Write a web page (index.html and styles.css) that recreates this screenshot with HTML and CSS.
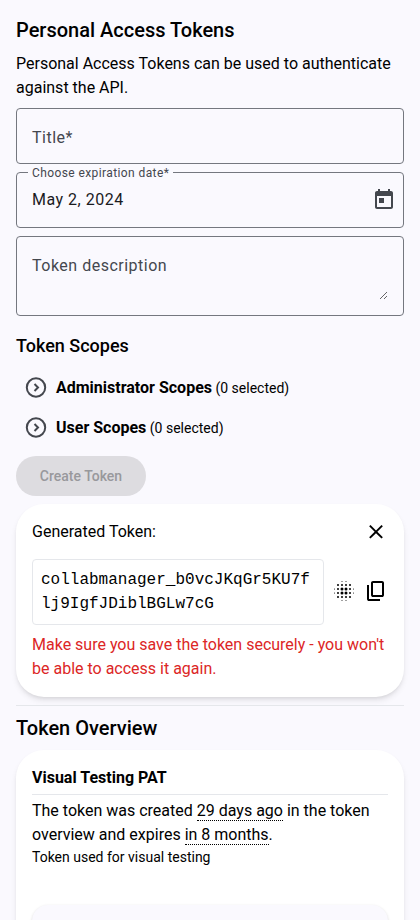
FILE: index.html
```html
<!DOCTYPE html>
<html lang="en">
<head>
<meta charset="utf-8">
<title>Personal Access Tokens</title>
<link rel="stylesheet" href="styles.css">
</head>
<body>
<main class="page">
  <h1 class="heading">Personal Access Tokens</h1>
  <p class="intro">Personal Access Tokens can be used to authenticate against the API.</p>
  <form class="form">
    <div class="field"><span class="placeholder">Title*</span></div>
    <div class="field">
      <label class="floating">Choose expiration date*</label>
      <span class="value">May 2, 2024</span>
      <svg class="icon muted" viewBox="0 0 24 24"><path d="M19 3h-1V1h-2v2H8V1H6v2H5c-1.11 0-1.99.9-1.99 2L3 19c0 1.1.89 2 2 2h14c1.1 0 2-.9 2-2V5c0-1.1-.9-2-2-2zm0 16H5V8h14v11zM7 10h5v5H7z"/></svg>
    </div>
    <div class="field area"><textarea class="textarea" placeholder="Token description"></textarea></div>
    <h2 class="subheading">Token Scopes</h2>
    <div class="scope">
      <svg class="icon chevron" viewBox="0 0 24 24"><circle cx="12" cy="11.5" r="9.200"/><path d="M10.500 8 14 11.500 10.500 15"/></svg>
      <span><b>Administrator Scopes</b><small> (0 selected)</small></span>
    </div>
    <div class="scope">
      <svg class="icon chevron" viewBox="0 0 24 24"><circle cx="12" cy="11.5" r="9.200"/><path d="M10.500 8 14 11.500 10.500 15"/></svg>
      <span><b>User Scopes</b><small> (0 selected)</small></span>
    </div>
    <button class="create" type="button" disabled>Create Token</button>
  </form>
  <section class="card generated">
    <div class="card-head">
      <span>Generated Token:</span>
      <svg class="icon" viewBox="0 0 24 24.500"><path d="M6.400 19 5 17.600 10.600 12 5 6.400 6.400 5 12 10.600 17.600 5 19 6.400 13.400 12 19 17.600 17.600 19 12 13.400z"/></svg>
    </div>
    <div class="token-row">
      <code class="token">collabmanager_b0vcJKqGr5KU7flj9IgfJDiblBGLw7cG</code>
      <svg class="icon raised" viewBox="0 0 24 24">
        <g><circle cx="10" cy="10" r="1.5"/><circle cx="14" cy="10" r="1.5"/><circle cx="10" cy="14" r="1.5"/><circle cx="14" cy="14" r="1.5"/></g>
        <g><circle cx="6" cy="6" r="1"/><circle cx="10" cy="6" r="1"/><circle cx="14" cy="6" r="1"/><circle cx="18" cy="6" r="1"/><circle cx="6" cy="10" r="1"/><circle cx="18" cy="10" r="1"/><circle cx="6" cy="14" r="1"/><circle cx="18" cy="14" r="1"/><circle cx="6" cy="18" r="1"/><circle cx="10" cy="18" r="1"/><circle cx="14" cy="18" r="1"/><circle cx="18" cy="18" r="1"/></g>
        <g><circle cx="10" cy="2.500" r=".5"/><circle cx="14" cy="2.500" r=".5"/><circle cx="2.500" cy="10" r=".5"/><circle cx="21.500" cy="10" r=".5"/><circle cx="2.500" cy="14" r=".5"/><circle cx="21.500" cy="14" r=".5"/><circle cx="10" cy="21.500" r=".5"/><circle cx="14" cy="21.500" r=".5"/></g>
      </svg>
      <svg class="icon raised" viewBox="0 0 24 24"><path d="M9 18q-.825 0-1.412-.587T7 16V4q0-.825.588-1.412T9 2h9q.825 0 1.413.588T20 4v12q0 .825-.587 1.413T18 18zm0-2h9V4H9zm-4 6q-.825 0-1.412-.587T3 20V6h2v14h11v2z"/></svg>
    </div>
    <p class="warning">Make sure you save the token securely - you won't be able to access it again.</p>
  </section>
  <hr class="divider">
  <h1 class="heading">Token Overview</h1>
  <section class="card overview">
    <h3 class="token-name">Visual Testing PAT</h3>
    <p>The token was created <span class="dotted">29 days ago</span> in the token overview and expires <span class="dotted">in 8 months</span>.</p>
    <p class="note">Token used for visual testing</p>
    <div class="panel"></div>
  </section>
</main>
</body>
</html>
```
FILE: styles.css
```css
* { box-sizing: border-box; margin: 0; padding: 0; }
html, body { height: 100%; overflow: hidden; }
body {
  background: #faf9fe;
  color: #000;
  font: 400 16px/24px Roboto, sans-serif;
}
.page { height: 100%; overflow: hidden; padding: 16px; }
.heading { font-size: 20px; line-height: 28px; font-weight: 500; }
.intro { margin: 8px 0; }
.form { display: flex; flex-direction: column; }
.field {
  position: relative;
  display: flex;
  align-items: center;
  justify-content: space-between;
  height: 56px;
  margin-bottom: 8px;
  padding: 0 7px 0 15px;
  border: 1px solid #74777f;
  border-radius: 4px;
  letter-spacing: 0.5px;
}
.placeholder { color: #44474e; padding-top: 3px; }
.value { color: #1a1b1f; }
.floating {
  position: absolute;
  left: 11px;
  top: -8px;
  padding: 0 4px;
  background: #faf9fe;
  color: #44474e;
  font-size: 12px;
  line-height: 16px;
  letter-spacing: 0.4px;
}
.area { height: 80px; padding: 0 15px; }
.textarea {
  width: 100%;
  height: 48px;
  padding-top: 2px;
  border: 0;
  outline: 0;
  background: transparent;
  font: inherit;
  letter-spacing: inherit;
  resize: vertical;
  overflow: auto;
}
.textarea::placeholder { color: #44474e; opacity: 1; }
.subheading { margin: 8px 0; font-size: 18px; line-height: 28px; font-weight: 500; }
.scope { display: flex; align-items: center; gap: 8px; height: 40px; padding-left: 8px; }
.scope b { font-weight: 700; }
.scope small { font-size: 14px; }
.icon { flex: none; width: 24px; height: 24px; fill: #000; }
.raised { margin-bottom: 2px; }
.muted { fill: #44474e; }
.chevron { fill: none; stroke: #44474e; stroke-width: 2; }
.create {
  align-self: flex-start;
  width: 130px;
  height: 40px;
  margin: 8px 0;
  border: 0;
  border-radius: 20px;
  background: #dddce0;
  color: #98989c;
  font: 500 14px/20px Roboto, sans-serif;
}
.card {
  padding: 16px;
  border-radius: 28px;
  background: #fff;
  box-shadow: 0 4px 6px -1px rgb(0 0 0 / 0.1), 0 2px 4px -2px rgb(0 0 0 / 0.1);
}
.card-head { display: flex; justify-content: space-between; height: 24px; margin-bottom: 15px; }
.token-row { display: flex; align-items: center; gap: 8px; }
.token {
  flex: none;
  width: 292px;
  padding: 8px;
  border: 1px solid #e5e7eb;
  border-radius: 4px;
  font: 16px/24px "Liberation Mono", monospace;
  word-break: break-all;
}
.warning { margin-top: 8px; color: #dc2626; }
.divider { margin: 8px 0; border: 0; border-top: 1px solid #e5e7eb; }
.overview { margin-top: 8px; height: 300px; }
.token-name {
  height: 29px;
  margin-bottom: 4px;
  border-bottom: 1px solid #e5e7eb;
  font-size: 16px;
  line-height: 24px;
  font-weight: 700;
}
.dotted { border-bottom: 1px dotted #000; }
.note { font-size: 14px; line-height: 20px; }
.panel {
  height: 80px;
  margin-top: 38px;
  border-radius: 16px;
  background: #faf9fe;
  box-shadow: 0 1px 3px rgb(0 0 0 / 0.15);
}
```
